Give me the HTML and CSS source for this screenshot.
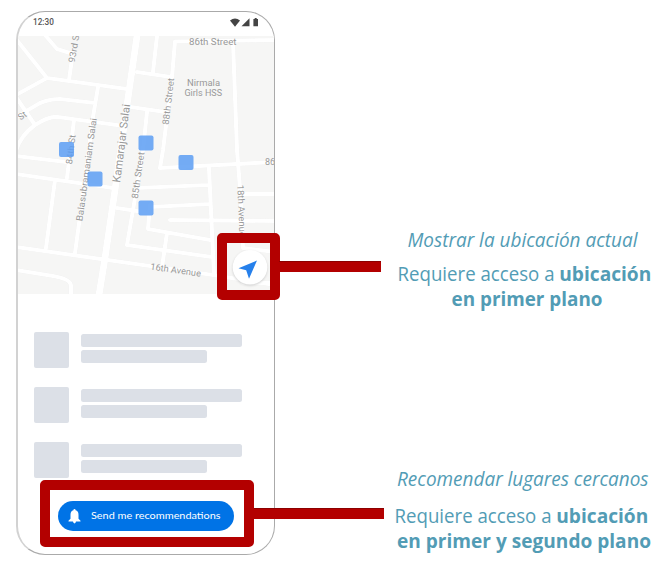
FILE: index.html
```html
<!DOCTYPE html>
<html lang="es">
<head>
<meta charset="utf-8">
<title>Acceso a la ubicación</title>
<link rel="stylesheet" href="styles.css">
</head>
<body>
<main class="stage">
  <section class="phone">
    <header class="status">
      <svg class="clock" width="24" height="12"><text x="0" y="8.7" textLength="20.8" lengthAdjust="spacingAndGlyphs">12:30</text></svg>
      <svg class="system" width="30" height="10" viewBox="0 0 30 10">
        <path d="M0 2.6Q5-1.4 10 2.6L5 8.7Z"/><path d="M19.5.3V8.3H11.5Z"/><path d="M24.7 0h2v1h1.3v7.3h-4.6v-7.3h1.3z"/>
      </svg>
    </header>
    <svg class="map" viewBox="18 36 256 258" width="256" height="258">
      <rect class="land" x="18" y="36" width="256" height="258"/>
      <g class="roads">
        <path d="M16 39L47 78M16 95L47 78L127 89M45 35L57 49L70 53M73 52L69 80"/>
        <path d="M16 117L40 103Q50 99 60 99L95 103M98 87L93 117L84 187L75 253M16 151Q20 136 35 125Q49 116 58 117L124 126M16 97L35 125"/>
        <path d="M74 120L67 178M16 156L66 162M16 174L113 188M55 180L46 248"/>
        <path d="M16 247L150 266L213 275L275 285M16 270L53 276Q71 279 71 286V295"/>
        <path d="M137 72L171 77M131 107L165 112M275 40L175 41.5L172 77L163 150L160 168L275 162M157 36L153 72"/>
        <path d="M233 42L237 150L240 188L243 248L275 252M147 112L143 150L133 210L127 245L212 257M117 208L150 213"/>
        <path d="M137 188L208 185M209 168L214 275M150 207L210 204M170 220L275 221M150 205L148 229L210 240M167 233L162 267M241 194H275M243 275V283H275"/>
        <path class="avenue" d="M137 36L127 105L115 190L105 258L99 295"/>
      </g>
      <g class="labels">
        <text x="189" y="44.8" textLength="47.5" lengthAdjust="spacingAndGlyphs">86th Street</text>
        <text x="187" y="86.3" textLength="33" lengthAdjust="spacingAndGlyphs">Nirmala</text>
        <text x="184.5" y="96.2" textLength="37.5" lengthAdjust="spacingAndGlyphs">Girls HSS</text>
        <text transform="translate(168.5 125) rotate(-83)" textLength="47" lengthAdjust="spacingAndGlyphs">88th Street</text>
        <text transform="translate(74.5 63) rotate(-80)" textLength="31" lengthAdjust="spacingAndGlyphs">93rd St</text>
        <text class="big" transform="translate(120 183) rotate(-82.7)" textLength="79" lengthAdjust="spacingAndGlyphs">Kamarajar Salai</text>
        <text transform="translate(82.3 221.5) rotate(-82)" textLength="104" lengthAdjust="spacingAndGlyphs">Balasubramaniam Salai</text>
        <text transform="translate(72 164.5) rotate(-83)" textLength="29.5" lengthAdjust="spacingAndGlyphs">84th St</text>
        <text transform="translate(137.8 199) rotate(-82)" textLength="47" lengthAdjust="spacingAndGlyphs">85th Street</text>
        <text transform="translate(237.3 185) rotate(87.5)" textLength="52" lengthAdjust="spacingAndGlyphs">18th Avenue</text>
        <text transform="translate(150 269.5) rotate(8)" textLength="51" lengthAdjust="spacingAndGlyphs">16th Avenue</text>
        <text x="265" y="165">86</text>
        <text transform="translate(20.5 120.5) rotate(-35)">St</text>
      </g>
      <g class="places">
        <rect x="59" y="142" width="15" height="15" rx="2"/>
        <rect x="87.5" y="171.5" width="15" height="15" rx="2"/>
        <rect x="138.5" y="135.5" width="15" height="15" rx="2"/>
        <rect x="138.5" y="200.5" width="15" height="15" rx="2"/>
        <rect x="178.5" y="155" width="15" height="15" rx="2"/>
      </g>
      <circle class="locate" cx="250" cy="267.3" r="17.3"/>
      <path class="arrow" d="M257 260.5L249 278.7L246.2 270.3L238.5 268.2Z"/>
    </svg>
    <div class="list">
      <div class="item"><i class="thumb"></i><div class="bars"><i class="bar"></i><i class="bar short"></i></div></div>
      <div class="item"><i class="thumb"></i><div class="bars"><i class="bar"></i><i class="bar short"></i></div></div>
      <div class="item"><i class="thumb"></i><div class="bars"><i class="bar"></i><i class="bar short"></i></div></div>
    </div>
    <button class="send">
      <svg width="13" height="15" viewBox="0 0 13 15"><path d="M6.5 0Q7.6 0 7.6 1.3Q10.5 2.2 10.5 5.8V9.8L12.5 11.8V12.6H.5V11.8L2.5 9.8V5.8Q2.5 2.2 5.4 1.3Q5.4 0 6.5 0ZM5 12.6H8Q7.8 14.4 6.5 14.4Q5.2 14.4 5 12.6Z"/></svg>
      <svg width="131" height="14"><text x="0" y="10.4" textLength="129.5" lengthAdjust="spacingAndGlyphs">Send me recommendations</text></svg>
    </button>
  </section>
  <section class="notes">
    <svg class="note" viewBox="390 226 270 90" width="270" height="90">
      <text class="title" x="407.5" y="247" textLength="230" lengthAdjust="spacingAndGlyphs">Mostrar la ubicación actual</text>
      <text x="397.5" y="281" textLength="157" lengthAdjust="spacingAndGlyphs">Requiere acceso a</text>
      <text class="strong" x="559.3" y="281" textLength="92" lengthAdjust="spacingAndGlyphs">ubicación</text>
      <text class="strong" x="451.5" y="306" textLength="151" lengthAdjust="spacingAndGlyphs">en primer plano</text>
    </svg>
    <svg class="note" viewBox="390 465 270 90" width="270" height="90">
      <text class="title" x="397" y="486" textLength="251.5" lengthAdjust="spacingAndGlyphs">Recomendar lugares cercanos</text>
      <text x="394.5" y="523" textLength="157" lengthAdjust="spacingAndGlyphs">Requiere acceso a</text>
      <text class="strong" x="556.3" y="523" textLength="92" lengthAdjust="spacingAndGlyphs">ubicación</text>
      <text class="strong" x="397" y="548" textLength="254" lengthAdjust="spacingAndGlyphs">en primer y segundo plano</text>
    </svg>
  </section>
  <div class="mark mark-locate"></div>
  <div class="mark mark-send"></div>
</main>
</body>
</html>
```
FILE: styles.css
```css
* { box-sizing: border-box; }
body { margin: 0; background: #fff; }
.stage {
  position: relative;
  display: flex;
  width: 666px;
  height: 562px;
  padding: 11px 0 0 16px;
  overflow: hidden;
}
.phone {
  display: flex;
  flex-direction: column;
  width: 259px;
  height: 544px;
  border: 1px solid #aaa;
  border-left: 2px solid #d2d2d2;
  border-radius: 29px;
}
.status {
  display: flex;
  flex: none;
  justify-content: space-between;
  height: 24px;
  padding: 4px 15px 0 15px;
}
.clock { font: 500 9px Roboto, sans-serif; fill: #555; }
.system { margin: 1.5px -1px 0 0; fill: #444; }
.map { display: block; flex: none; }
.land { fill: #f6f6f5; }
.roads { fill: none; stroke: #fff; stroke-width: 4.2; stroke-linejoin: round; stroke-linecap: round; filter: drop-shadow(0 0 .5px #e6e6e6); }
.roads .avenue { stroke-width: 7; }
.places { fill: #5c9df3; fill-opacity: .85; }
.labels { font: 9px Roboto, sans-serif; fill: #999; }
.labels .big { font-size: 11px; }
.locate { fill: #fff; filter: drop-shadow(0 1px 1px #ccc); }
.arrow { fill: #2680eb; }
.list { display: flex; flex-direction: column; gap: 19.5px; padding: 38.3px 0 0 15.7px; }
.item { display: flex; gap: 12.2px; }
.thumb { width: 35.5px; height: 35.5px; border-radius: 2px; background: #dce0e7; }
.bars { display: flex; flex-direction: column; gap: 3.5px; padding-top: 1.8px; }
.bar { width: 160.5px; height: 12.8px; border-radius: 2.5px; background: #dce0e7; }
.short { width: 125.5px; }
.send {
  display: flex;
  flex: none;
  align-items: center;
  gap: 10px;
  width: 176px;
  height: 30px;
  margin: 23.5px 0 0 40px;
  padding: 0 0 0 10px;
  border: 0;
  border-radius: 15px;
  background: #0073e6;
  font: 400 10px Lato, sans-serif;
  fill: #fff;
}
.notes { display: flex; flex-direction: column; gap: 149px; padding: 215px 0 0 115px; }
.note { display: block; font: 19.3px "Open Sans", "Noto Sans", sans-serif; fill: #529cb5; }
.note .title { font-style: italic; }
.note .strong { font-weight: 700; }
.mark { position: absolute; border: 10px solid #b30000; border-radius: 5px; }
.mark::after { content: ""; position: absolute; height: 10px; background: #b30000; border-top: 1px solid #8c0000; }
.mark-locate { left: 217px; top: 233px; width: 63px; height: 67px; }
.mark-locate::after { left: 52px; top: 18px; width: 102px; }
.mark-send { left: 40px; top: 480px; width: 214px; height: 67px; }
.mark-send::after { left: 204px; top: 18px; width: 130px; }
```
